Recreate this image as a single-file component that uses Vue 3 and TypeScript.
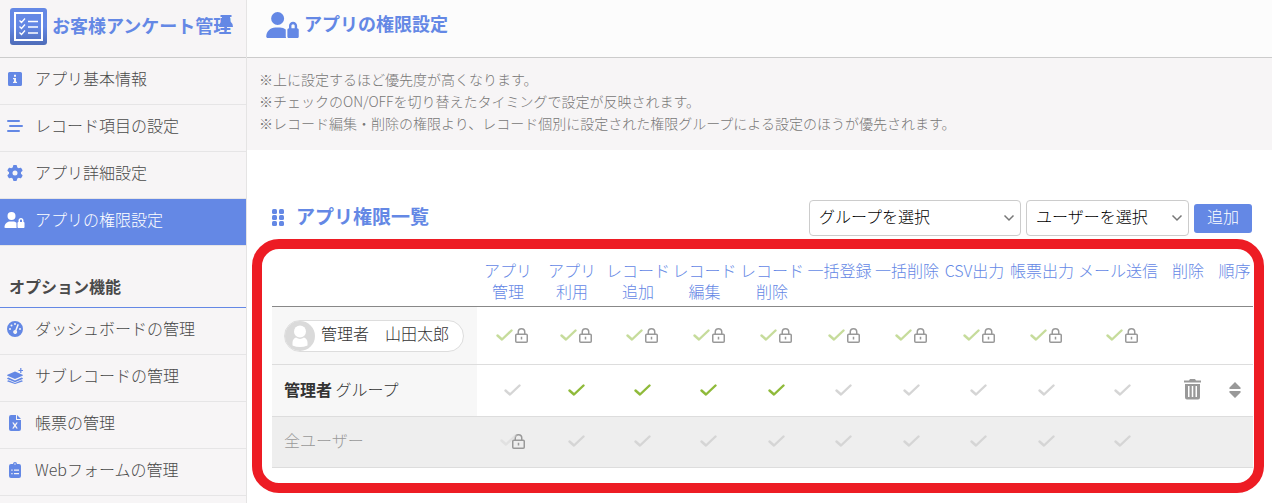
<script setup lang="ts">
import { ref } from 'vue'

type IconName = 'info' | 'list' | 'gear' | 'userLock' | 'gauge' | 'layers' | 'file' | 'clipboard'

interface IconDef {
  box: string
  width: number
  path: string
}

interface MenuItem {
  label: string
  icon: IconName
  active?: boolean
}

interface Column {
  lines: string[]
  width: number
}

interface PermissionRow {
  id: string
  kind: 'user' | 'group' | 'all'
  name: string
  checks: boolean[]
  locked: boolean[]
}

const icons: Record<IconName, IconDef> = {
  info: {
    box: '0 0 16 16',
    width: 16,
    path: 'M2.5 1h11A1.5 1.5 0 0 1 15 2.500v11a1.500 1.500 0 0 1-1.500 1.500h-11A1.500 1.500 0 0 1 1 13.500v-11A1.500 1.500 0 0 1 2.500 1zM7 3.800v1.900h2V3.800zM6 7v1.200h1v2.600H6V12h4v-1.200H9V7z',
  },
  list: {
    box: '0 0 16 16',
    width: 16,
    path: 'M1 2h11a1 1 0 0 1 0 2H1a1 1 0 0 1 0-2zM3 7h12a1 1 0 0 1 0 2H3a1 1 0 0 1 0-2zM1 12h11a1 1 0 0 1 0 2H1a1 1 0 0 1 0-2z',
  },
  gear: {
    box: '0 0 512 512',
    width: 16,
    path: 'M495.900 166.600c3.200 8.700 .5 18.400-6.400 24.600l-43.300 39.400c1.100 8.300 1.700 16.800 1.700 25.400s-.6 17.100-1.700 25.400l43.300 39.400c6.900 6.200 9.600 15.900 6.400 24.600c-4.400 11.900-9.700 23.300-15.800 34.300l-4.700 8.100c-6.600 11-14 21.400-22.100 31.200c-5.900 7.200-15.700 9.600-24.500 6.800l-55.700-17.700c-13.400 10.300-28.200 18.900-44 25.400l-12.500 57.100c-2 9.100-9 16.300-18.200 17.800c-13.800 2.300-28 3.500-42.500 3.500s-28.700-1.200-42.500-3.500c-9.200-1.500-16.200-8.700-18.200-17.800l-12.500-57.100c-15.800-6.500-30.600-15.100-44-25.400L83.100 425.900c-8.800 2.800-18.600 .3-24.500-6.800c-8.100-9.800-15.500-20.200-22.100-31.200l-4.700-8.100c-6.100-11-11.400-22.400-15.800-34.300c-3.200-8.700-.5-18.400 6.400-24.600l43.300-39.400C64.600 273.100 64 264.600 64 256s.6-17.100 1.700-25.400L22.400 191.200c-6.900-6.200-9.600-15.900-6.400-24.600c4.400-11.900 9.700-23.300 15.800-34.300l4.700-8.100c6.600-11 14-21.400 22.100-31.200c5.900-7.200 15.700-9.600 24.500-6.800l55.700 17.700c13.400-10.300 28.200-18.900 44-25.400l12.500-57.100c2-9.100 9-16.300 18.200-17.800C227.300 1.200 241.500 0 256 0s28.700 1.200 42.500 3.500c9.200 1.500 16.200 8.700 18.200 17.800l12.500 57.100c15.800 6.500 30.600 15.100 44 25.400l55.700-17.700c8.800-2.800 18.600-.3 24.500 6.800c8.100 9.800 15.500 20.200 22.100 31.200l4.700 8.100c6.100 11 11.400 22.400 15.800 34.300zM256 336a80 80 0 1 0 0-160 80 80 0 1 0 0 160z',
  },
  userLock: {
    box: '0 0 640 512',
    width: 21,
    path: 'M224 256A128 128 0 1 0 224 0a128 128 0 1 0 0 256zm-45.700 48C79.800 304 0 383.800 0 482.300C0 498.700 13.300 512 29.700 512l362.800 0c-5.400-9.400-8.600-20.300-8.600-32l0-128c0-2.100 .1-4.200 .3-6.300c-31-26-71-41.700-114.600-41.700l-91.400 0zM528 240c17.700 0 32 14.300 32 32l0 48-64 0 0-48c0-17.700 14.300-32 32-32zm-80 32l0 48c-17.700 0-32 14.300-32 32l0 128c0 17.700 14.300 32 32 32l160 0c17.700 0 32-14.300 32-32l0-128c0-17.700-14.300-32-32-32l0-48c0-44.200-35.800-80-80-80s-80 35.800-80 80z',
  },
  gauge: {
    box: '0 0 16 16',
    width: 16,
    path: 'M8 0a8 8 0 1 1 0 16A8 8 0 0 1 8 0zM8 2a1 1 0 1 0 0 2 1 1 0 0 0 0-2zM4.500 3.500a1 1 0 1 0 0 2 1 1 0 0 0 0-2zM3 7a1 1 0 1 0 0 2 1 1 0 0 0 0-2zM13 7a1 1 0 1 0 0 2 1 1 0 0 0 0-2zM10.300 3.600L8.200 9a2 2 0 1 0 1.400.600l2.100-5.400a.75.75 0 0 0-1.400-.6z',
  },
  layers: {
    box: '0 0 16 16',
    width: 16,
    path: 'M8 3.500l7.600 3.300a.5.5 0 0 1 0 .9L8 11 .4 7.700a.5.5 0 0 1 0-.9zM1.500 9.600L8 12.500l6.500-2.900 1.100.5a.5.5 0 0 1 0 .9L8 14.300.400 11a.5.5 0 0 1 0-.9zM1.500 12.300L8 15l6.500-2.700 1 .5c.4.2.4.6 0 .8L8 16 .5 13.600c-.4-.2-.4-.6 0-.8zM13.200 0h1.200v1.900h1.600v1.200h-1.600V5h-1.200V3.100h-1.700V1.900h1.700z',
  },
  file: {
    box: '0 0 12 16',
    width: 12,
    path: 'M2 0h5v4.500a.5.5 0 0 0 .5.500H12v9a2 2 0 0 1-2 2H2a2 2 0 0 1-2-2V2a2 2 0 0 1 2-2zM8 0l4 4H8zM3.200 7.500l1.900 3-1.900 3h1.600L6 11.600l1.200 1.900h1.600l-1.900-3 1.900-3H7.200L6 9.400 4.800 7.500z',
  },
  clipboard: {
    box: '0 0 12 16',
    width: 12,
    path: 'M4 2a2 2 0 0 1 4 0h2a2 2 0 0 1 2 2v10a2 2 0 0 1-2 2H2a2 2 0 0 1-2-2V4a2 2 0 0 1 2-2zM6 1.300a.7.7 0 1 0 0 1.400.7.7 0 0 0 0-1.400zM2.300 7.500v1.300h1.300V7.500zM5 7.500v1.300h5V7.500zM2.300 11v1.300h1.300V11zM5 11v1.300h5V11z',
  },
}

const mainMenu: MenuItem[] = [
  { label: 'アプリ基本情報', icon: 'info' },
  { label: 'レコード項目の設定', icon: 'list' },
  { label: 'アプリ詳細設定', icon: 'gear' },
  { label: 'アプリの権限設定', icon: 'userLock', active: true },
]

const optionMenu: MenuItem[] = [
  { label: 'ダッシュボードの管理', icon: 'gauge' },
  { label: 'サブレコードの管理', icon: 'layers' },
  { label: '帳票の管理', icon: 'file' },
  { label: 'Webフォームの管理', icon: 'clipboard' },
]

const notes: string[] = [
  '※上に設定するほど優先度が高くなります。',
  '※チェックのON/OFFを切り替えたタイミングで設定が反映されます。',
  '※レコード編集・削除の権限より、レコード個別に設定された権限グループによる設定のほうが優先されます。',
]

const columns: Column[] = [
  { lines: ['アプリ', '管理'], width: 62 },
  { lines: ['アプリ', '利用'], width: 66 },
  { lines: ['レコード', '追加'], width: 66 },
  { lines: ['レコード', '編集'], width: 67 },
  { lines: ['レコード', '削除'], width: 68 },
  { lines: ['一括登録'], width: 67 },
  { lines: ['一括削除'], width: 68 },
  { lines: ['CSV出力'], width: 67 },
  { lines: ['帳票出力'], width: 68 },
  { lines: ['メール送信'], width: 84 },
]

const fill = (value: boolean): boolean[] => columns.map(() => value)

const rows = ref<PermissionRow[]>([
  { id: 'owner', kind: 'user', name: '管理者　山田太郎', checks: fill(true), locked: fill(true) },
  {
    id: 'admins',
    kind: 'group',
    name: '管理者',
    checks: columns.map((_, i) => i >= 1 && i <= 4),
    locked: fill(false),
  },
  { id: 'everyone', kind: 'all', name: '全ユーザー', checks: fill(false), locked: columns.map((_, i) => i === 0) },
])

const group = ref('')
const user = ref('')
</script>

<template>
  <div class="page">
    <aside class="sidebar">
      <div class="brand">
        <svg class="brand-icon" viewBox="0 0 37 37" aria-hidden="true">
          <defs>
            <linearGradient id="brand-fill" x1="0" y1="0" x2="0" y2="1">
              <stop offset="0.5" stop-color="#6488e5" />
              <stop offset="1" stop-color="#4e6cb8" />
            </linearGradient>
          </defs>
          <rect width="37" height="37" rx="3" fill="url(#brand-fill)" />
          <rect x="5" y="5" width="27" height="27" fill="none" stroke="#fff" stroke-width="2" />
          <path
            d="M9.500 12.500l2 2 3.500-4M9.500 18.500l2 2 3.500-4M9.500 24.500l2 2 3.500-4M18 13.500h10M18 19h10M18 25h10"
            fill="none"
            stroke="#fff"
            stroke-width="1.300"
          />
        </svg>
        <span class="brand-name">お客様アンケート管理</span>
        <button class="pin" type="button" aria-label="メニューを固定">
          <svg viewBox="0 0 14 18" width="14" height="18" aria-hidden="true">
            <path d="M1.500 1h11v2H11l.5 4.500q2.500 2 2.500 5.500H8v3l-1 1.500L6 16v-3H0q0-3.500 2.500-5.500L3 3H1.500z" fill="#6488e5" />
          </svg>
        </button>
      </div>
      <nav>
        <a v-for="item in mainMenu" :key="item.label" href="#" class="menu-item" :class="{ active: item.active }">
          <span class="menu-icon">
            <svg :viewBox="icons[item.icon].box" :width="icons[item.icon].width" height="16" aria-hidden="true">
              <path :d="icons[item.icon].path" fill="currentColor" fill-rule="evenodd" />
            </svg>
          </span>
          <span class="menu-label">{{ item.label }}</span>
        </a>
        <h2 class="menu-heading">オプション機能</h2>
        <a v-for="item in optionMenu" :key="item.label" href="#" class="menu-item">
          <span class="menu-icon">
            <svg :viewBox="icons[item.icon].box" :width="icons[item.icon].width" height="16" aria-hidden="true">
              <path :d="icons[item.icon].path" fill="currentColor" fill-rule="evenodd" />
            </svg>
          </span>
          <span class="menu-label">{{ item.label }}</span>
        </a>
      </nav>
    </aside>

    <main class="main">
      <header class="main-header">
        <svg viewBox="0 0 640 512" width="33" height="26" aria-hidden="true">
          <path :d="icons.userLock.path" fill="#6488e5" fill-rule="evenodd" />
        </svg>
        <h1>アプリの権限設定</h1>
      </header>
      <div class="notes">
        <p v-for="note in notes" :key="note">{{ note }}</p>
      </div>

      <div class="toolbar">
        <svg viewBox="0 0 12 17" width="12" height="17" aria-hidden="true">
          <g fill="#6488e5">
            <rect width="5" height="5" rx="1.500" />
            <rect x="7" width="5" height="5" rx="1.500" />
            <rect y="6" width="5" height="5" rx="1.500" />
            <rect x="7" y="6" width="5" height="5" rx="1.500" />
            <rect y="12" width="5" height="5" rx="1.500" />
            <rect x="7" y="12" width="5" height="5" rx="1.500" />
          </g>
        </svg>
        <h2>アプリ権限一覧</h2>
        <div class="select-box group-box">
          <select v-model="group" aria-label="グループを選択">
            <option value="">グループを選択</option>
          </select>
          <svg viewBox="0 0 12 8" width="12" height="8" aria-hidden="true">
            <path d="M1.500 1.500L6 6l4.500-4.500" fill="none" stroke="#777" stroke-width="1.500" />
          </svg>
        </div>
        <div class="select-box user-box">
          <select v-model="user" aria-label="ユーザーを選択">
            <option value="">ユーザーを選択</option>
          </select>
          <svg viewBox="0 0 12 8" width="12" height="8" aria-hidden="true">
            <path d="M1.500 1.500L6 6l4.500-4.500" fill="none" stroke="#777" stroke-width="1.500" />
          </svg>
        </div>
        <button class="add" type="button">追加</button>
      </div>

      <section class="frame">
        <table>
          <colgroup>
            <col class="col-name" />
            <col v-for="(column, i) in columns" :key="i" :style="{ width: column.width + 'px' }" />
            <col class="col-delete" />
            <col class="col-order" />
          </colgroup>
          <thead>
            <tr>
              <td></td>
              <th v-for="(column, i) in columns" :key="i" scope="col">
                <template v-for="(line, n) in column.lines" :key="n"><br v-if="n > 0" />{{ line }}</template>
              </th>
              <th scope="col">削除</th>
              <th scope="col">順序</th>
            </tr>
          </thead>
          <tbody>
            <tr v-for="row in rows" :key="row.id" :class="'row-' + row.kind">
              <th scope="row">
                <span v-if="row.kind === 'user'" class="chip">
                  <svg viewBox="0 0 30 30" width="30" height="30" aria-hidden="true">
                    <circle cx="15" cy="15" r="15" fill="#dadada" />
                    <circle cx="15" cy="10.500" r="6" fill="#fff" />
                    <path d="M7.500 24.500v-3a5.500 5.500 0 0 1 3.500-5 7 7 0 0 0 8 0 5.500 5.500 0 0 1 3.500 5v3q-7.500 3-15 0z" fill="#fff" />
                  </svg>
                  <span class="chip-name">{{ row.name }}</span>
                </span>
                <span v-else-if="row.kind === 'group'"><b>{{ row.name }}</b> グループ</span>
                <span v-else>{{ row.name }}</span>
              </th>
              <td v-for="(column, i) in columns" :key="i">
                <label class="check" :class="{ locked: row.locked[i] }">
                  <input
                    v-model="row.checks[i]"
                    type="checkbox"
                    :disabled="row.locked[i]"
                    :aria-label="row.name + ' ' + column.lines.join('')"
                  />
                  <svg class="tick" viewBox="0 0 17 12" width="17" height="12" aria-hidden="true">
                    <path d="M1.500 6.500L6 10.500 15.500 1.500" fill="none" stroke="currentColor" stroke-width="2.400" stroke-linecap="round" stroke-linejoin="round" />
                  </svg>
                  <svg v-if="row.locked[i]" class="lock" viewBox="0 0 13 15" width="13" height="15" aria-hidden="true">
                    <rect x="0.750" y="6.250" width="11.500" height="8" rx="1" fill="none" stroke="#999" stroke-width="1.500" />
                    <path d="M3.250 6V4a3.250 3.250 0 0 1 6.500 0v2M6.500 8.800v2.800" fill="none" stroke="#999" stroke-width="1.500" />
                  </svg>
                </label>
              </td>
              <td>
                <button v-if="row.kind === 'group'" class="icon-button" type="button" aria-label="削除">
                  <svg viewBox="0 0 17 21" width="17" height="21" aria-hidden="true">
                    <path
                      d="M6 0h5l1 1.500h5V3.500H0V1.500h5zM1 5h15v13.500a2 2 0 0 1-2 2H3a2 2 0 0 1-2-2zM4 7v11h1.500V7zM7.750 7v11h1.500V7zM11.500 7v11H13V7z"
                      fill="#999"
                      fill-rule="evenodd"
                    />
                  </svg>
                </button>
              </td>
              <td>
                <button v-if="row.kind === 'group'" class="icon-button" type="button" aria-label="順序を変更">
                  <svg viewBox="0 0 12 16" width="12" height="16" aria-hidden="true">
                    <path d="M6 0l5.500 5.500q.8 1.500-.8 1.500H1.300Q-.3 7 .5 5.500zM6 16l5.500-5.500q.8-1.500-.8-1.500H1.300Q-.3 9 .5 10.500z" fill="#999" />
                  </svg>
                </button>
              </td>
            </tr>
          </tbody>
        </table>
      </section>
    </main>
  </div>
</template>

<style>
body {
  background: #fff;
}
</style>

<style scoped>
.page {
  display: flex;
  min-height: 100vh;
  font: 300 16px/22px 'Noto Sans CJK JP', sans-serif;
  color: #4a4a4a;
}

.sidebar {
  flex: none;
  box-sizing: border-box;
  width: 247px;
  border-right: 1px solid #e5e4e4;
  background: #f7f5f6;
}

.brand {
  position: relative;
  display: flex;
  align-items: center;
  gap: 5px;
  box-sizing: border-box;
  height: 58px;
  padding: 0 0 4px 10px;
  border-bottom: 1px solid #ccc;
  color: #6488e5;
  font-size: 18px;
  font-weight: 700;
  white-space: nowrap;
}

.brand-name {
  padding-bottom: 4px;
}

.brand-icon {
  flex: none;
  width: 37px;
  height: 37px;
}

.pin {
  position: absolute;
  top: 14px;
  right: 13px;
  display: flex;
  padding: 0;
  border: 0;
  background: none;
}

.menu-item {
  display: flex;
  align-items: center;
  box-sizing: border-box;
  height: 47px;
  padding-bottom: 4px;
  border-bottom: 1px solid #e6e5e6;
  color: inherit;
  text-decoration: none;
}

.menu-label {
  padding-bottom: 2px;
}

.menu-icon {
  display: flex;
  justify-content: center;
  width: 29px;
  margin-right: 6px;
  color: #6488e5;
}

.menu-item.active,
.menu-item.active .menu-icon {
  background: #6488e5;
  color: #fff;
}

.menu-heading {
  margin: 0;
  padding: 29px 9px 10px;
  border-bottom: 1px solid #6488e5;
  font-size: 16px;
  font-weight: 700;
  line-height: 22px;
}

.main {
  flex: 1;
  min-width: 0;
}

.main-header {
  display: flex;
  align-items: flex-start;
  gap: 5px;
  box-sizing: border-box;
  height: 58px;
  padding: 12px 19px 0;
  border-bottom: 1px solid #ccc;
  background: #fcfcfc;
}

h1 {
  margin: 0;
  color: #6488e5;
  font-size: 18px;
  font-weight: 700;
  line-height: 22px;
}

.notes {
  padding: 10px 12px 16px;
  background: #f7f5f6;
  color: #777;
  font-size: 14px;
  line-height: 22px;
}

.notes p {
  margin: 0;
}

.toolbar {
  display: flex;
  align-items: center;
  gap: 5px;
  margin-top: 50px;
  padding: 0 20px 0 25px;
}

.toolbar h2 {
  margin: 0 auto 0 7px;
  padding-bottom: 4px;
  color: #6488e5;
  font-size: 19px;
  font-weight: 700;
}

.toolbar > svg {
  margin-bottom: 2px;
}

.select-box {
  position: relative;
}

.group-box {
  width: 212px;
}

.user-box {
  width: 163px;
}

.select-box svg {
  position: absolute;
  top: 14px;
  right: 6px;
  pointer-events: none;
}

select {
  appearance: none;
  display: block;
  width: 100%;
  height: 36px;
  padding: 0 9px 4px;
  border: 1px solid #ccc;
  border-radius: 4px;
  background: #fff;
  color: #000;
  font: inherit;
}

.add {
  width: 58px;
  height: 29px;
  padding: 0 0 4px;
  border: 0;
  border-radius: 3px;
  background: #6488e5;
  color: #fff;
  font: inherit;
}

.frame {
  margin: 3px 8px 0 5px;
  padding: 0 1px 15px 10px;
  border: 10px solid #ed1c24;
  border-radius: 27px;
}

table {
  width: 100%;
  table-layout: fixed;
  border-collapse: separate;
  border-spacing: 0;
}

.col-name {
  width: 205px;
}

.col-delete {
  width: 56px;
}

.col-order {
  width: 37px;
}

th,
td {
  padding: 0;
  font-weight: 300;
}

thead th,
thead td {
  height: 46px;
  padding-top: 11px;
  border-bottom: 1px solid #888;
  color: #6488e5;
  line-height: 21px;
  vertical-align: top;
  white-space: nowrap;
}

tbody th,
tbody td {
  height: 47px;
  padding-bottom: 4px;
  border-bottom: 1px solid #ddd;
  vertical-align: middle;
}

tbody th {
  padding-left: 12px;
  background: #f7f7f7;
  color: #333;
  text-align: left;
}

tbody td {
  height: 49px;
  padding-bottom: 2px;
  padding-left: 8px;
}

.row-user th,
.row-user td {
  height: 57px;
  padding-bottom: 0;
}

.row-group td:last-child {
  padding-left: 0;
}

.row-all th,
.row-all td {
  height: 48px;
  background: #eee;
}

.row-all th {
  height: 46px;
  color: #999;
}

b {
  font-weight: 700;
}

.chip {
  display: flex;
  align-items: center;
  gap: 6px;
  box-sizing: border-box;
  width: 180px;
  height: 32px;
  border: 1px solid #ddd;
  border-radius: 16px;
  background: #fff;
  white-space: nowrap;
}

.chip-name {
  padding-bottom: 6px;
}

.check {
  position: relative;
  display: flex;
  align-items: center;
  justify-content: center;
  gap: 2px;
}

.check input {
  position: absolute;
  width: 17px;
  height: 17px;
  margin: 0;
  opacity: 0;
}

.tick {
  color: #d5d5d5;
}

.check input:checked + .tick {
  color: #8fba3a;
}

.check.locked .tick {
  margin-bottom: 2px;
  opacity: 0.5;
}

.row-all .lock {
  margin-left: -7px;
}

.icon-button {
  display: flex;
  margin: 0 auto;
  padding: 0;
  border: 0;
  background: none;
}
</style>
